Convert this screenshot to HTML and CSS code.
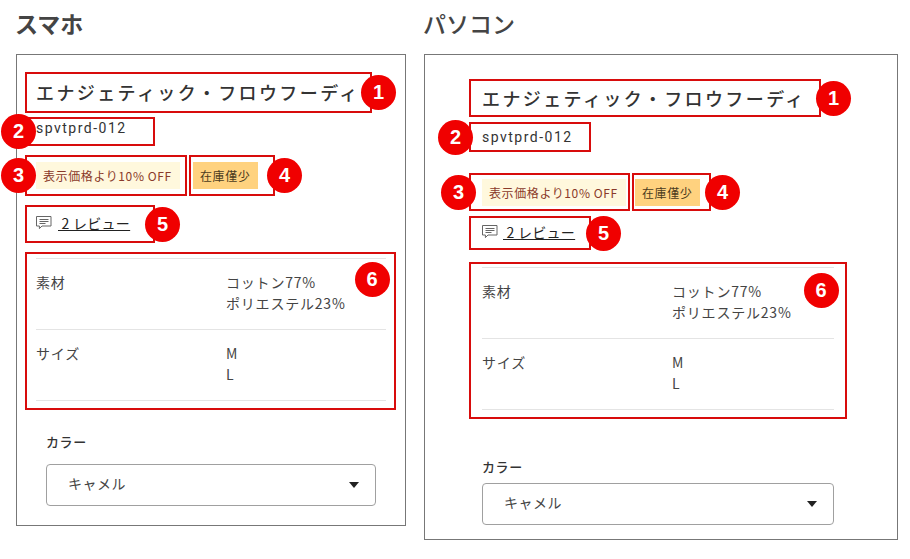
FILE: index.html
```html
<!DOCTYPE html>
<html lang="ja">
<head>
    <meta charset="UTF-8">
    <meta name="viewport" content="width=device-width, initial-scale=1.0">
    <title>スマホ / パソコン</title>
    <link rel="stylesheet" href="styles.css">
</head>
<body>
    <div class="compare">
        <section class="view view-sp">
            <h2 class="view-title">スマホ</h2>
            <div class="panel">
                <div class="mark mark-title">
                    <h1 class="product-title">エナジェティック・フロウフーディ</h1>
                    <span class="num">1</span>
                </div>
                <div class="mark mark-sku">
                    <div class="sku">spvtprd-012</div>
                    <span class="num">2</span>
                </div>
                <div class="badges">
                    <div class="mark mark-sale">
                        <span class="badge badge-sale">表示価格より10% OFF</span>
                        <span class="num">3</span>
                    </div>
                    <div class="mark mark-stock">
                        <span class="badge badge-stock">在庫僅少</span>
                        <span class="num">4</span>
                    </div>
                </div>
                <div class="mark mark-review">
                    <a class="review" href="#">
                        <svg class="review-icon" viewBox="0 0 16 16" width="16" height="16"><path d="M.5 1.5h14.5v9.5H6l-2.6 2.6V11H.5z"/><path d="M3.5 4.5h9M3.5 6.5h9M3.5 8.5h6"/></svg>
                        <span class="review-link">&nbsp;2 レビュー</span>
                    </a>
                    <span class="num">5</span>
                </div>
                <div class="mark mark-spec">
                    <div class="spec-row">
                        <div>素材</div>
                        <div>コットン77%<br>ポリエステル23%</div>
                    </div>
                    <div class="spec-row">
                        <div>サイズ</div>
                        <div>M<br>L</div>
                    </div>
                    <span class="num">6</span>
                </div>
                <div class="option">
                    <div class="option-label">カラー</div>
                    <div class="select">キャメル<span class="caret"></span></div>
                </div>
            </div>
        </section>

        <section class="view view-pc">
            <h2 class="view-title">パソコン</h2>
            <div class="panel">
                <div class="mark mark-title">
                    <h1 class="product-title">エナジェティック・フロウフーディ</h1>
                    <span class="num">1</span>
                </div>
                <div class="mark mark-sku">
                    <div class="sku">spvtprd-012</div>
                    <span class="num">2</span>
                </div>
                <div class="badges">
                    <div class="mark mark-sale">
                        <span class="badge badge-sale">表示価格より10% OFF</span>
                        <span class="num">3</span>
                    </div>
                    <div class="mark mark-stock">
                        <span class="badge badge-stock">在庫僅少</span>
                        <span class="num">4</span>
                    </div>
                </div>
                <div class="mark mark-review">
                    <a class="review" href="#">
                        <svg class="review-icon" viewBox="0 0 16 16" width="16" height="16"><path d="M.5 1.5h14.5v9.5H6l-2.6 2.6V11H.5z"/><path d="M3.5 4.5h9M3.5 6.5h9M3.5 8.5h6"/></svg>
                        <span class="review-link">&nbsp;2 レビュー</span>
                    </a>
                    <span class="num">5</span>
                </div>
                <div class="mark mark-spec">
                    <div class="spec-row">
                        <div>素材</div>
                        <div>コットン77%<br>ポリエステル23%</div>
                    </div>
                    <div class="spec-row">
                        <div>サイズ</div>
                        <div>M<br>L</div>
                    </div>
                    <span class="num">6</span>
                </div>
                <div class="option">
                    <div class="option-label">カラー</div>
                    <div class="select">キャメル<span class="caret"></span></div>
                </div>
            </div>
        </section>
    </div>
</body>
</html>
```

FILE: styles.css
```css
:root {
    --red: #d80c0c;
    --badge-red: #f00000;
    --ink: #333;
}

* {
    box-sizing: border-box;
}

html, body {
    margin: 0;
    padding: 0;
    background: #fff;
    color: var(--ink);
    font-family: "Noto Sans CJK JP", "Noto Sans", sans-serif;
}

.compare {
    display: flex;
    align-items: flex-start;
    gap: 18px;
    padding: 9px 12px 0 16px;
}

.view-title {
    margin: 0 0 16px -1px;
    height: 29px;
    font-size: 23px;
    line-height: 29px;
    font-weight: 700;
    color: #444;
}

.view-pc .view-title {
    font-weight: 500;
}

.panel {
    border: 1px solid #777;
}

.view-sp .panel {
    width: 390px;
    height: 472px;
    padding: 17px 0 0 8px;
}

.view-pc .panel {
    width: 474px;
    height: 486px;
    padding: 24px 0 0 44px;
}

/* red annotation boxes */
.mark {
    position: relative;
    border: 2px solid var(--red);
}

.num {
    position: absolute;
    width: 35px;
    height: 35px;
    border-radius: 50%;
    background: var(--badge-red);
    color: #fff;
    font-family: "Liberation Sans", sans-serif;
    font-size: 20px;
    font-weight: 700;
    line-height: 35px;
    text-align: center;
}

.mark-title {
    display: flex;
    align-items: center;
}

.view-sp .mark-title {
    width: 347px;
    height: 41px;
    padding: 0 0 2px 9px;
}

.view-pc .mark-title {
    width: 352px;
    height: 38px;
    padding-left: 11px;
}

.product-title {
    margin: 0;
    font-size: 18px;
    font-weight: 500;
    letter-spacing: 2.4px;
    white-space: nowrap;
    color: #333;
}

.view-sp .mark-title .num {
    top: 1px;
    right: -26px;
}

.view-pc .mark-title .num {
    top: 0;
    right: -32px;
}

.mark-sku {
    font-size: 14px;
}

.view-sp .mark-sku {
    width: 130px;
    height: 29px;
    margin-top: 4px;
    padding: 1px 0 0 9px;
}

.view-pc .mark-sku {
    width: 122px;
    height: 30px;
    margin-top: 5px;
    padding: 5px 0 0 11px;
}

.sku {
    font-family: "Roboto", sans-serif;
    line-height: 17px;
    letter-spacing: 1.5px;
    color: #333;
}

.view-sp .mark-sku .num {
    top: -5px;
    left: -26px;
}

.view-pc .mark-sku .num {
    top: -4px;
    left: -33px;
}

.badges {
    display: flex;
    gap: 2px;
}

.view-sp .badges {
    margin-top: 9px;
}

.view-pc .badges {
    margin-top: 21px;
}

.mark-sale,
.mark-stock {
    display: flex;
    align-items: center;
}

.view-sp .mark-sale,
.view-sp .mark-stock {
    height: 41px;
}

.view-pc .mark-sale,
.view-pc .mark-stock {
    height: 38px;
}

.view-sp .mark-sale {
    width: 162px;
    padding-left: 9px;
}

.view-pc .mark-sale {
    width: 161px;
    padding-left: 11px;
}

.view-sp .mark-stock {
    width: 86px;
    padding-left: 2px;
}

.view-pc .mark-stock {
    width: 79px;
    padding-left: 1px;
}

.badge {
    display: block;
    height: 27px;
    padding: 0 8px 0 7px;
    font-size: 12px;
    line-height: 27px;
    letter-spacing: 0.6px;
    white-space: nowrap;
}

.badge-sale {
    background: #fff8dd;
    color: #8a3a2a;
}

.badge-stock {
    background: #ffd27f;
    color: #4a3a20;
}

.view-sp .mark-sale .num {
    top: 1px;
    left: -26px;
}

.view-pc .mark-sale .num {
    top: 0;
    left: -30px;
}

.view-sp .mark-stock .num {
    top: 1px;
    right: -29px;
}

.view-pc .mark-stock .num {
    top: 0;
    right: -31px;
}

.mark-review {
    display: flex;
    align-items: center;
}

.view-sp .mark-review {
    width: 130px;
    height: 38px;
    margin-top: 9px;
    padding: 0 0 3px 9px;
}

.view-pc .mark-review {
    width: 122px;
    height: 34px;
    margin-top: 5px;
    padding: 0 0 2px 11px;
}

.review {
    display: flex;
    align-items: center;
    gap: 6px;
    color: #222;
    font-size: 14px;
    letter-spacing: 0.3px;
    text-decoration: none;
}

.view-pc .review {
    gap: 5px;
}

.review-icon {
    fill: none;
    stroke: #666;
    stroke-width: 1;
}

.review-link {
    text-decoration: underline;
}

.view-sp .mark-review .num {
    top: 0;
    right: -27px;
}

.view-pc .mark-review .num {
    top: -2px;
    right: -32px;
}

.mark-spec {
    font-size: 14px;
    line-height: 21px;
    letter-spacing: 0.8px;
    color: #444;
}

.view-sp .mark-spec {
    width: 371px;
    height: 158px;
    margin-top: 9px;
    padding: 4px 8px 0 9px;
}

.view-pc .mark-spec {
    width: 378px;
    height: 157px;
    margin-top: 12px;
    padding: 3px 11px 0;
}

.spec-row {
    display: grid;
    grid-template-columns: 190px 1fr;
    height: 71px;
    padding-top: 13px;
    border-top: 1px solid #e4e4e4;
}

.spec-row:last-of-type {
    height: 72px;
    border-bottom: 1px solid #e4e4e4;
}

.view-sp .mark-spec .num {
    top: 8px;
    right: 4px;
}

.view-pc .mark-spec .num {
    top: 9px;
    right: 6px;
}

.view-sp .option {
    margin: 22px 0 0 21px;
    width: 330px;
}

.view-pc .option {
    margin: 38px 0 0 13px;
    width: 352px;
}

.option-label {
    font-size: 13px;
    font-weight: 500;
    line-height: 20px;
    color: #333;
    letter-spacing: 0.6px;
}

.view-sp .option-label {
    margin-bottom: 12px;
}

.view-pc .option-label {
    margin-bottom: 6px;
}

.select {
    position: relative;
    height: 42px;
    padding-left: 21px;
    border: 1px solid #a0a0a0;
    border-radius: 4px;
    font-size: 14px;
    line-height: 37px;
    letter-spacing: 0.5px;
    color: #444;
}

.caret {
    position: absolute;
    top: 17px;
    right: 16px;
    border-style: solid;
    border-width: 6px 5px 0;
    border-color: #222 transparent transparent;
}
```
